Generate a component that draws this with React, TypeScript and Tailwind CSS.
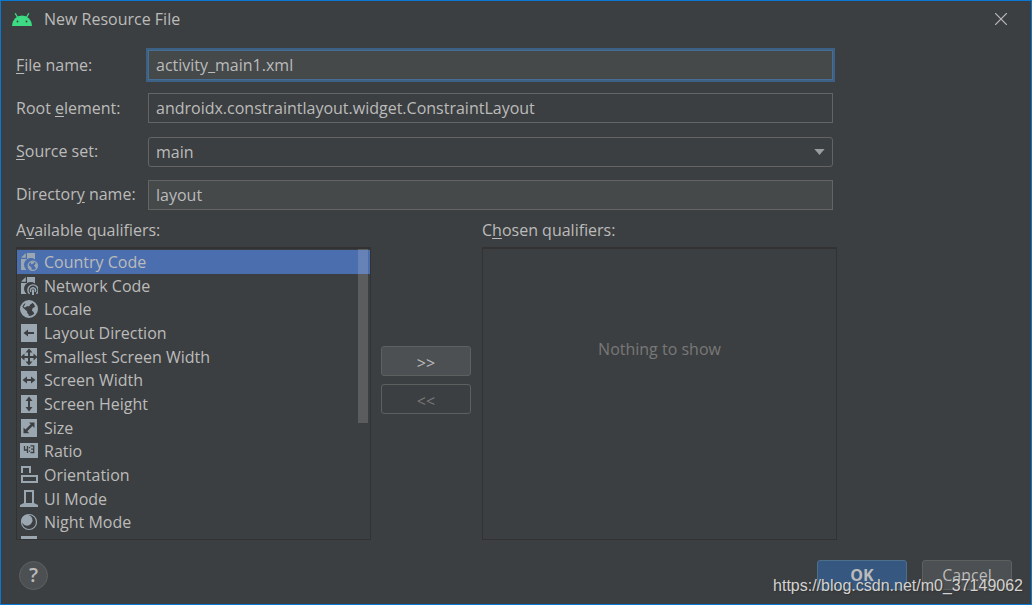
import { useState } from "react"
import type { ReactNode } from "react"
import clsx from "clsx"

const ICON = "#9aa7b0"

function Icon({ children }: { children: ReactNode }) {
  return (
    <svg
      className="h-[18px] w-[18px] shrink-0"
      viewBox="0 0 18 18"
      fill="none"
      aria-hidden="true"
    >
      {children}
    </svg>
  )
}

function Tile({ children }: { children?: ReactNode }) {
  return (
    <Icon>
      <rect x="1" y="0" width="16" height="18" fill={ICON} />
      {children}
    </Icon>
  )
}

function Page() {
  return (
    <>
      <path d="M7 0h8v6.400A6.600 6.600 0 0 0 6.600 17H1V6h6z" fill={ICON} />
      <path d="M5.800 0v4.800H1z" fill={ICON} />
    </>
  )
}

function CountryCodeIcon() {
  return (
    <Icon>
      <Page />
      <circle cx="12.800" cy="12.800" r="4.600" stroke={ICON} strokeWidth="1.300" />
      <path
        d="M8.200 11.500l3.400 3.200v2.700c-2.600-.4-4-3-3.400-5.900zM10.500 9l4-.5-.7 1.800-2.600 1.200zM16 9.500c1.900 2 1.900 4.800.2 6.700l-1-2.200-1.200-1.200 1.200-1.600z"
        fill={ICON}
      />
    </Icon>
  )
}

function NetworkCodeIcon() {
  return (
    <Icon>
      <Page />
      <path
        d="M9.600 16.800a5.100 5.100 0 1 1 6.800 0M11 14.800a2.500 2.500 0 1 1 4 0"
        stroke={ICON}
        strokeWidth="1.400"
      />
      <path d="M12 12.500h2V18h-2z" fill={ICON} />
    </Icon>
  )
}

function LocaleIcon() {
  return (
    <Icon>
      <circle cx="9" cy="9" r="8" stroke={ICON} strokeWidth="2" />
      <path
        d="M1.200 6l6 5.500v1.500l1.500 1.500v2.700C3.500 17 .2 12 1.200 6zM5.500 2l4-1.200 3 .7c0 1.500-.7 2.500-2 2.800l-1.300 2H7L5 7.500 3.500 7 5 4.500zM14 3c3 2.300 4 6 2.300 9.800l-1.800 1.800-1-2.600-1.600-1.500.8-2.500 2.300-1z"
        fill={ICON}
      />
    </Icon>
  )
}

function LayoutDirectionIcon() {
  return (
    <Tile>
      <path d="M3.500 9L8 5.500V8h6v2H8v2.500z" fill="#3c3f41" />
    </Tile>
  )
}

function SmallestWidthIcon() {
  return (
    <Tile>
      <path
        d="M9 .5l3.500 4H10V8h3.500V5.500l4 3.500-4 3.500V10H10v3.500h2.500L9 17.500l-3.500-4H8V10H4.500v2.500L.5 9l4-3.500V8H8V4.500H5.500z"
        fill="#3c3f41"
      />
    </Tile>
  )
}

function ScreenWidthIcon() {
  return (
    <Tile>
      <path
        d="M2.500 9L7 5.500V8h4V5.500L15.500 9 11 12.500V10H7v2.500z"
        fill="#3c3f41"
      />
    </Tile>
  )
}

function ScreenHeightIcon() {
  return (
    <Tile>
      <path
        d="M9 1.500L12.500 6H10v6h2.500L9 16.500 5.500 12H8V6H5.500z"
        fill="#3c3f41"
      />
    </Tile>
  )
}

function SizeIcon() {
  return (
    <Tile>
      <path
        d="M14.500 3.500V9l-2-2-5.200 5.200 2 2H3.500V8.500l2 2 5.200-5.200L9 3.500z"
        fill="#3c3f41"
      />
    </Tile>
  )
}

function RatioIcon() {
  return (
    <Icon>
      <rect x="0" y="1" width="18" height="15" fill={ICON} />
      <path
        d="M4.500 4v4h3M7.500 4v7M10.500 3.800h3.200v6.700h-3.200M11 7.200h2.700M9.500 5v1.200M9.500 8.500v1.200"
        stroke="#3c3f41"
        strokeWidth="1.300"
      />
    </Icon>
  )
}

function OrientationIcon() {
  return (
    <Icon>
      <path d="M2 7V1h8v6" stroke={ICON} strokeWidth="2" />
      <path d="M2 10h15v6H2z" stroke={ICON} strokeWidth="2" />
    </Icon>
  )
}

function UiModeIcon() {
  return (
    <Icon>
      <path d="M5 14V1h8v13" stroke={ICON} strokeWidth="2" />
      <path d="M4 13h10l4 2v2H0v-2z" fill={ICON} />
    </Icon>
  )
}

function NightModeIcon() {
  return (
    <Icon>
      <circle cx="9" cy="9" r="7.500" stroke={ICON} strokeWidth="1.200" />
      <circle cx="7" cy="7.200" r="5.500" fill={ICON} />
    </Icon>
  )
}

const QUALIFIERS = [
  { name: "Country Code", icon: <CountryCodeIcon /> },
  { name: "Network Code", icon: <NetworkCodeIcon /> },
  { name: "Locale", icon: <LocaleIcon /> },
  { name: "Layout Direction", icon: <LayoutDirectionIcon /> },
  { name: "Smallest Screen Width", icon: <SmallestWidthIcon /> },
  { name: "Screen Width", icon: <ScreenWidthIcon /> },
  { name: "Screen Height", icon: <ScreenHeightIcon /> },
  { name: "Size", icon: <SizeIcon /> },
  { name: "Ratio", icon: <RatioIcon /> },
  { name: "Orientation", icon: <OrientationIcon /> },
  { name: "UI Mode", icon: <UiModeIcon /> },
  { name: "Night Mode", icon: <NightModeIcon /> },
]

function Mnemonic({ children }: { children: string }) {
  return <span className="underline underline-offset-2">{children}</span>
}

function TitleBar() {
  return (
    <header className="flex h-9 items-center pr-6 pl-[11px]">
      <svg className="h-[13px] w-5" viewBox="0 0 20 13" aria-hidden="true">
        <path d="M0 13a10 10.500 0 0 1 20 0z" fill="#3ddc84" />
        <path
          d="M3.200 .3l2.500 4.500M16.800 .3L14.300 4.800"
          stroke="#3ddc84"
          strokeWidth="1.300"
        />
        <circle cx="5.500" cy="8.500" r=".9" fill="#3c3f41" />
        <circle cx="14.500" cy="8.500" r=".9" fill="#3c3f41" />
      </svg>
      <h1 className="ml-3 flex-1">New Resource File</h1>
      <button type="button" aria-label="Close">
        <svg
          className="h-3 w-3"
          viewBox="0 0 12 12"
          stroke="#bbbbbb"
          strokeWidth="1.200"
        >
          <path d="M0 0l12 12M12 0L0 12" />
        </svg>
      </button>
    </header>
  )
}

const field = "h-[30px] w-full border px-[7px] text-[#bbbbbb] outline-none"

function Fields() {
  return (
    <div className="mr-1 grid h-[160px] grid-cols-[132px_1fr] content-between items-center">
      <label htmlFor="file" className="pb-px">
        <Mnemonic>F</Mnemonic>ile name:
      </label>
      <input
        id="file"
        className={clsx(
          field,
          "border-[#466d94] bg-[#45494a] ring-2 ring-[#3d6185]",
        )}
        defaultValue="activity_main1.xml"
      />
      <label htmlFor="root-element" className="pb-px">
        Root <Mnemonic>e</Mnemonic>lement:
      </label>
      <input
        id="root-element"
        className={clsx(field, "border-[#646464] bg-[#3c3f41]")}
        defaultValue="androidx.constraintlayout.widget.ConstraintLayout"
      />
      <label htmlFor="source-set" className="pb-px">
        <Mnemonic>S</Mnemonic>ource set:
      </label>
      <div className="relative">
        <select
          id="source-set"
          className={clsx(
            field,
            "block appearance-none rounded-[3px] border-[#646464] bg-[#3c3f41]",
          )}
        >
          <option>main</option>
        </select>
        <svg
          className="pointer-events-none absolute top-3 right-2 h-[6px] w-[11px]"
          viewBox="0 0 12 7"
          aria-hidden="true"
        >
          <path d="M0 0h12L6 7z" fill="#9a9da0" />
        </svg>
      </div>
      <label htmlFor="directory" className="pb-px">
        Director<Mnemonic>y</Mnemonic> name:
      </label>
      <input
        id="directory"
        className={clsx(field, "border-[#646464] bg-[#45494a]")}
        defaultValue="layout"
      />
    </div>
  )
}

function AvailableList() {
  const [selected, setSelected] = useState("Country Code")
  return (
    <div className="relative h-[293px] overflow-hidden border border-t-2 border-[#323232]">
      <ul className="grid h-[309px] auto-rows-fr pt-px">
        {QUALIFIERS.map(({ name, icon }) => (
          <li key={name} className="grid">
            <button
              type="button"
              onClick={() => setSelected(name)}
              className={clsx(
                "flex items-center gap-[6px] pl-[3px] text-left",
                selected === name && "bg-[#4b6eaf]",
              )}
            >
              {icon}
              {name}
            </button>
          </li>
        ))}
        <li className="pt-[2px] pl-[3px]">
          <Tile />
        </li>
      </ul>
      <div className="absolute top-0 right-[2px] h-[174px] w-[10px] bg-[#d0d0d0]/20" />
    </div>
  )
}

const button = "h-[30px] w-[90px] rounded-[3px] border"

export default function App() {
  return (
    <div className="flex min-h-screen flex-col border border-[#0a78d2] bg-[#3c3f41] font-['Open_Sans','Noto_Sans',sans-serif] text-base leading-5 text-[#bbbbbb]">
      <TitleBar />
      <main className="mt-[13px] mr-[194px] ml-[15px]">
        <Fields />
        <div className="mt-[10px] grid grid-cols-[1fr_91px_1fr] gap-x-[10px]">
          <section>
            <h2 className="mb-[7px]">
              A<Mnemonic>v</Mnemonic>ailable qualifiers:
            </h2>
            <AvailableList />
          </section>
          <div className="flex flex-col gap-2 pt-[126px]">
            <button
              type="button"
              aria-label="Add qualifier"
              className={clsx(button, "border-[#5e6060] bg-[#4c5052] pt-[3px]")}
            >
              &gt;&gt;
            </button>
            <button
              type="button"
              aria-label="Remove qualifier"
              className={clsx(button, "border-[#5e6060] pt-[3px] text-[#777777]")}
              disabled
            >
              &lt;&lt;
            </button>
          </div>
          <section>
            <h2 className="mb-[7px]">
              C<Mnemonic>h</Mnemonic>osen qualifiers:
            </h2>
            <div className="h-[293px] border border-t-2 border-[#323232] pt-[90px] text-center text-[#787878]">
              Nothing to show
            </div>
          </section>
        </div>
      </main>
      <footer className="relative mt-5 flex items-center gap-[15px] pr-[19px] pl-[18px]">
        <button
          type="button"
          aria-label="Help"
          className="mr-auto h-[29px] w-[29px] rounded-full border border-[#5e6060] bg-[#4c5052] text-xl leading-none font-semibold"
        >
          ?
        </button>
        <button
          type="button"
          className={clsx(button, "border-[#4c708c] bg-[#365880] font-bold")}
        >
          OK
        </button>
        <button
          type="button"
          className={clsx(button, "border-[#5e6060] bg-[#4c5052]")}
        >
          Cancel
        </button>
        <span className="pointer-events-none absolute top-4 right-2 font-['Liberation_Sans',sans-serif] text-base leading-5 text-[#d2d2d2] [text-shadow:1px_1px_1px_#333]">
          https://blog.csdn.net/m0_37149062
        </span>
      </footer>
    </div>
  )
}
